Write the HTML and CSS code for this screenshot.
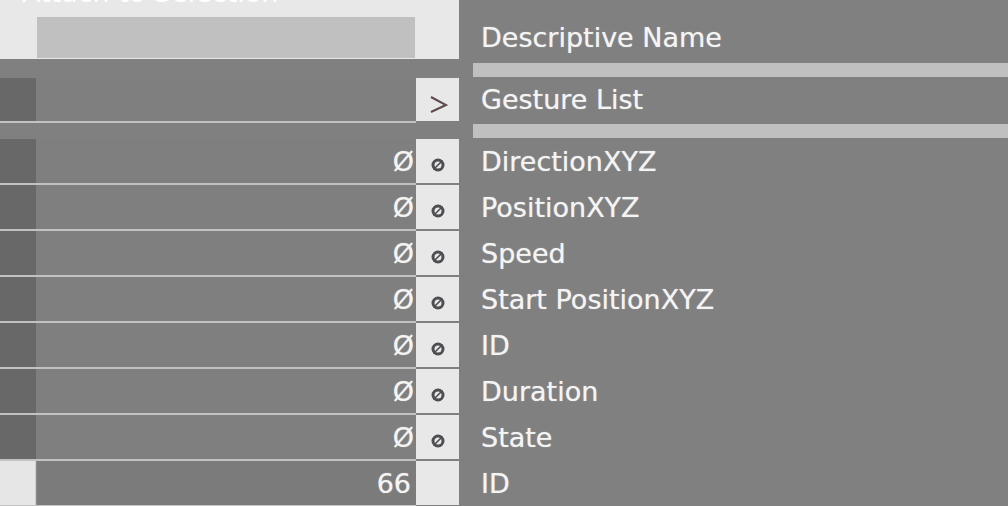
FILE: index.html
```html
<!DOCTYPE html>
<html lang="en">
  <head>
    <meta charset="UTF-8" />
    <meta name="viewport" content="width=device-width, initial-scale=1.0" />
    <title>Inspector</title>
    <link rel="stylesheet" href="styles.css">
  </head>
  <body>
    <div class="inspector">
      <div class="row row-top">
        <div class="pin-header">
          <div class="attach">Attach to Selection</div>
          <div class="name-field"></div>
        </div>
        <div class="label label-top">Descriptive Name</div>
      </div>

      <div class="divider divider-first">
        <div class="divider-left"></div>
        <div class="divider-bar"></div>
      </div>

      <div class="row row-gesture">
        <div class="pin">
          <div class="swatch"></div>
          <div class="field"></div>
          <div class="pin-btn">
            <svg class="chevron" width="20" height="18" viewBox="0 0 20 18">
              <polyline points="3,2 18,10 3,17" fill="none" stroke="#5c4a4c" stroke-width="2" />
            </svg>
          </div>
          <div class="line"></div>
        </div>
        <div class="label">Gesture List</div>
      </div>

      <div class="divider divider-second">
        <div class="divider-left"></div>
        <div class="divider-bar"></div>
      </div>

      <div class="row">
        <div class="pin">
          <div class="swatch"></div>
          <div class="field">Ø</div>
          <div class="pin-btn"><svg class="nil" width="16" height="16" viewBox="0 0 16 16"><circle cx="8" cy="8" r="5" fill="none" stroke="#4e4e52" stroke-width="3" /><line x1="3.5" y1="12.5" x2="12.5" y2="3.5" stroke="#4e4e52" stroke-width="1.6" /></svg></div>
          <div class="line"></div>
        </div>
        <div class="label">DirectionXYZ</div>
      </div>

      <div class="row">
        <div class="pin">
          <div class="swatch"></div>
          <div class="field">Ø</div>
          <div class="pin-btn"><svg class="nil" width="16" height="16" viewBox="0 0 16 16"><circle cx="8" cy="8" r="5" fill="none" stroke="#4e4e52" stroke-width="3" /><line x1="3.5" y1="12.5" x2="12.5" y2="3.5" stroke="#4e4e52" stroke-width="1.6" /></svg></div>
          <div class="line"></div>
        </div>
        <div class="label">PositionXYZ</div>
      </div>

      <div class="row">
        <div class="pin">
          <div class="swatch"></div>
          <div class="field">Ø</div>
          <div class="pin-btn"><svg class="nil" width="16" height="16" viewBox="0 0 16 16"><circle cx="8" cy="8" r="5" fill="none" stroke="#4e4e52" stroke-width="3" /><line x1="3.5" y1="12.5" x2="12.5" y2="3.5" stroke="#4e4e52" stroke-width="1.6" /></svg></div>
          <div class="line"></div>
        </div>
        <div class="label">Speed</div>
      </div>

      <div class="row">
        <div class="pin">
          <div class="swatch"></div>
          <div class="field">Ø</div>
          <div class="pin-btn"><svg class="nil" width="16" height="16" viewBox="0 0 16 16"><circle cx="8" cy="8" r="5" fill="none" stroke="#4e4e52" stroke-width="3" /><line x1="3.5" y1="12.5" x2="12.5" y2="3.5" stroke="#4e4e52" stroke-width="1.6" /></svg></div>
          <div class="line"></div>
        </div>
        <div class="label">Start PositionXYZ</div>
      </div>

      <div class="row">
        <div class="pin">
          <div class="swatch"></div>
          <div class="field">Ø</div>
          <div class="pin-btn"><svg class="nil" width="16" height="16" viewBox="0 0 16 16"><circle cx="8" cy="8" r="5" fill="none" stroke="#4e4e52" stroke-width="3" /><line x1="3.5" y1="12.5" x2="12.5" y2="3.5" stroke="#4e4e52" stroke-width="1.6" /></svg></div>
          <div class="line"></div>
        </div>
        <div class="label">ID</div>
      </div>

      <div class="row">
        <div class="pin">
          <div class="swatch"></div>
          <div class="field">Ø</div>
          <div class="pin-btn"><svg class="nil" width="16" height="16" viewBox="0 0 16 16"><circle cx="8" cy="8" r="5" fill="none" stroke="#4e4e52" stroke-width="3" /><line x1="3.5" y1="12.5" x2="12.5" y2="3.5" stroke="#4e4e52" stroke-width="1.6" /></svg></div>
          <div class="line"></div>
        </div>
        <div class="label">Duration</div>
      </div>

      <div class="row">
        <div class="pin">
          <div class="swatch"></div>
          <div class="field">Ø</div>
          <div class="pin-btn"><svg class="nil" width="16" height="16" viewBox="0 0 16 16"><circle cx="8" cy="8" r="5" fill="none" stroke="#4e4e52" stroke-width="3" /><line x1="3.5" y1="12.5" x2="12.5" y2="3.5" stroke="#4e4e52" stroke-width="1.6" /></svg></div>
          <div class="line"></div>
        </div>
        <div class="label">State</div>
      </div>

      <div class="row">
        <div class="pin">
          <div class="swatch swatch-light"></div>
          <div class="field field-boxed">66</div>
          <div class="pin-btn"></div>
          <div class="line"></div>
        </div>
        <div class="label">ID</div>
      </div>
    </div>
  </body>
</html>
```

FILE: styles.css
```css
* {
  margin: 0;
  padding: 0;
  box-sizing: border-box;
}
body {
  font-family: "DejaVu Sans", Verdana, sans-serif;
  background: #808080;
  color: #f4f4f4;
  overflow: hidden;
}
.inspector {
  display: flex;
  flex-direction: column;
  width: 1008px;
}
.row {
  display: flex;
  height: 46px;
}
.row-top {
  height: 59px;
  align-items: flex-end;
}
.row-gesture {
  height: 45px;
}
.pin-header {
  width: 459px;
  height: 59px;
  background: #e8e8e8;
  padding: 0 44px 1px 37px;
  display: flex;
  flex-direction: column;
}
.attach {
  height: 27px;
  margin-top: -21px;
  margin-left: -15px;
  font-size: 27px;
  line-height: 27px;
  color: #ffffff;
  white-space: nowrap;
}
.name-field {
  margin-top: 11px;
  flex: 1;
  background: #c0c0c0;
}
.label {
  flex: 1;
  height: 44px;
  padding-left: 22px;
  display: flex;
  align-items: center;
  font-size: 27px;
  line-height: 27px;
  white-space: nowrap;
  text-shadow: 0 0 1px rgba(255, 255, 255, 0.6);
}
.label-top {
  height: 41px;
  margin-bottom: 1px;
}
.row-gesture .label {
  height: 43px;
}
.divider {
  display: flex;
  height: 19px;
}
.divider-left {
  width: 473px;
}
.divider-bar {
  flex: 1;
  height: 14px;
  margin-top: 4px;
  background: #c0c0c0;
}
.divider-second {
  height: 16px;
}
.divider-second .divider-bar {
  margin-top: 1px;
}
.pin {
  width: 459px;
  display: grid;
  grid-template-columns: 36px 380px 43px;
  grid-template-rows: 44px 2px;
}
.row-gesture .pin {
  grid-template-rows: 43px 2px;
}
.swatch {
  background: #686868;
}
.swatch-light {
  background: #e6e6e6;
  border-right: 1px solid #cfcfcf;
}
.field {
  background: #7f7f7f;
  display: flex;
  align-items: center;
  justify-content: flex-end;
  padding-right: 2px;
  font-size: 27px;
  line-height: 27px;
  text-shadow: 0 0 1px rgba(255, 255, 255, 0.6);
}
.field-boxed {
  background: #7b7b7b;
  border-left: 1px solid #8c8c8c;
  padding-right: 5px;
}
.pin-btn {
  background: #e8e8e8;
  display: flex;
  align-items: center;
  justify-content: center;
}
.chevron {
  margin-top: 8px;
}
.nil {
  margin-top: 7px;
}
.line {
  grid-column: 1 / 3;
  background: #c2c2c2;
}
```
